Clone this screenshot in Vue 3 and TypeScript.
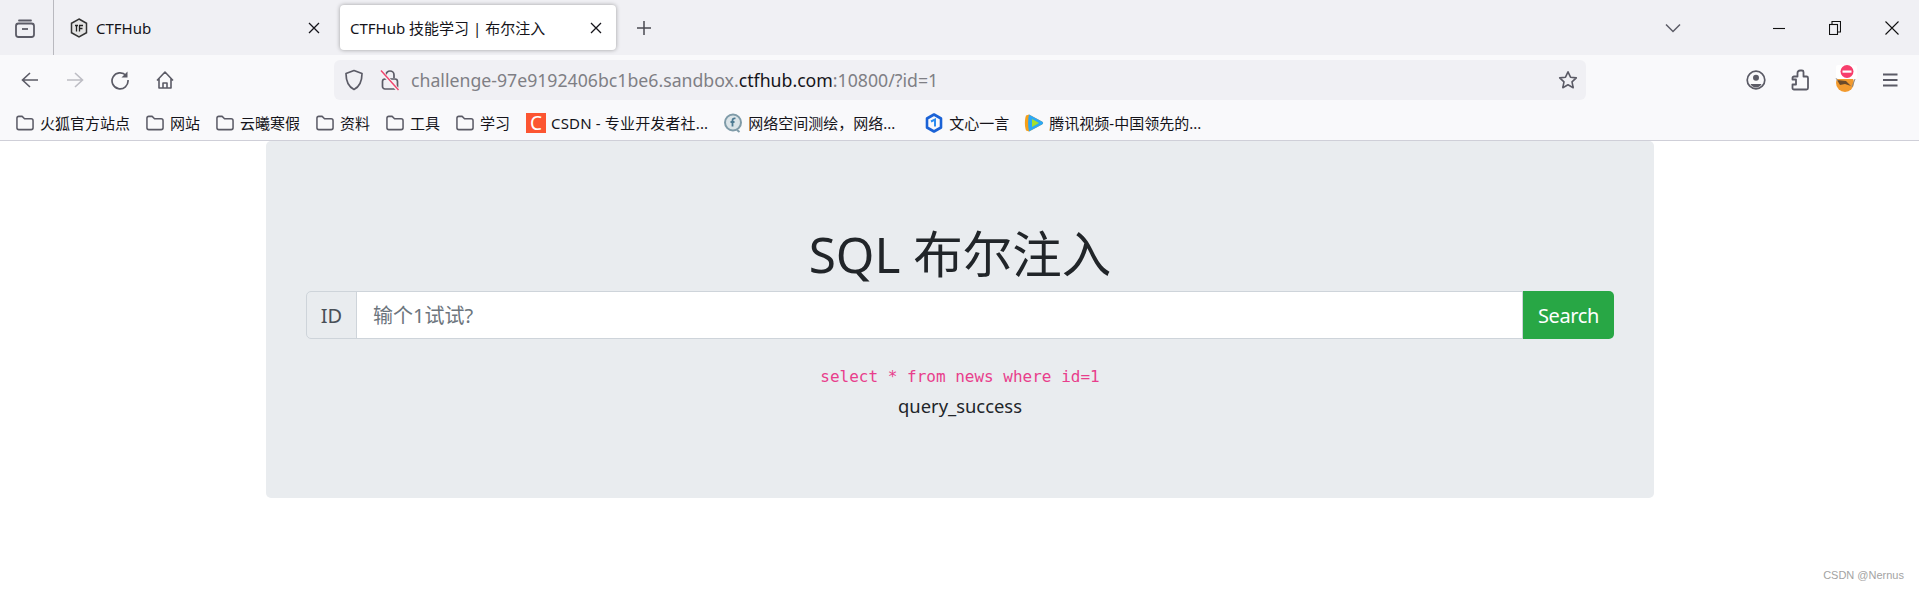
<script setup lang="ts">
interface Bookmark {
  label: string
  kind: 'folder' | 'csdn' | 'fofa' | 'wenxin' | 'tencent'
}
const bookmarks: Bookmark[] = [
  { label: '火狐官方站点', kind: 'folder' },
  { label: '网站', kind: 'folder' },
  { label: '云曦寒假', kind: 'folder' },
  { label: '资料', kind: 'folder' },
  { label: '工具', kind: 'folder' },
  { label: '学习', kind: 'folder' },
  { label: 'CSDN - 专业开发者社...', kind: 'csdn' },
  { label: '网络空间测绘，网络...', kind: 'fofa' },
  { label: '文心一言', kind: 'wenxin' },
  { label: '腾讯视频-中国领先的...', kind: 'tencent' }
]
</script>

<template>
  <div class="page">
    <header class="chrome">
      <div class="tabbar">
        <div class="tabs-btn">
          <svg width="22" height="22" viewBox="0 0 22 22" fill="none" stroke="#5b5b66" stroke-width="1.8">
            <path d="M5 3.5h12" stroke-linecap="round" />
            <rect x="2" y="6.5" width="18" height="13.5" rx="2.5" />
            <path d="M8 12h6" />
          </svg>
        </div>
        <div class="tab">
          <svg class="fav" width="18" height="20" viewBox="0 0 18 20">
            <path d="M9 1l7.5 4.3v9.4L9 19l-7.5-4.3V5.3z" fill="#e4e4e4" stroke="#333" stroke-width="1.5" />
            <path d="M5 7.5h3M6.500 7.500v6M9 7.500h4M9.500 7.500v6M9.500 10.500h3" fill="none" stroke="#222" stroke-width="1.300" />
          </svg>
          <span class="tab-title">CTFHub</span>
          <svg class="x" width="12" height="12" viewBox="0 0 12 12" stroke="#15141a" stroke-width="1.300">
            <path d="M1 1l10 10M11 1L1 11" />
          </svg>
        </div>
        <div class="tab active">
          <span class="tab-title">CTFHub 技能学习 | 布尔注入</span>
          <svg class="x" width="12" height="12" viewBox="0 0 12 12" stroke="#15141a" stroke-width="1.300">
            <path d="M1 1l10 10M11 1L1 11" />
          </svg>
        </div>
        <svg class="plus" width="16" height="16" viewBox="0 0 16 16" stroke="#4a4a52" stroke-width="1.500">
          <path d="M8 1v14M1 8h14" />
        </svg>
        <div class="spacer"></div>
        <svg class="chev" width="16" height="10" viewBox="0 0 16 10" fill="none" stroke="#5b5b66" stroke-width="1.500">
          <path d="M1 1.500l7 7 7-7" />
        </svg>
        <div class="winbtns">
          <svg width="12" height="12" viewBox="0 0 12 12" stroke="#111" stroke-width="1.100"><path d="M0 6.500h12" /></svg>
          <svg width="12" height="14" viewBox="0 0 12 14" fill="none" stroke="#111" stroke-width="1.100">
            <rect x="0.500" y="3.500" width="8" height="10" />
            <path d="M3 3V.5h8.500V11H9" />
          </svg>
          <svg width="14" height="14" viewBox="0 0 14 14" stroke="#111" stroke-width="1.100"><path d="M.5.5l13 13M13.500.5l-13 13" /></svg>
        </div>
      </div>

      <div class="toolbar">
        <div class="nav">
          <svg width="20" height="20" viewBox="0 0 20 20" fill="none" stroke="#5b5b66" stroke-width="1.600">
            <path d="M18 10H3M10 3l-7.500 7 7.500 7" />
          </svg>
          <svg width="20" height="20" viewBox="0 0 20 20" fill="none" stroke="#bdbdc4" stroke-width="1.600">
            <path d="M2 10h15M10 3l7.500 7-7.500 7" />
          </svg>
          <svg width="20" height="20" viewBox="0 0 20 20" fill="none" stroke="#5b5b66" stroke-width="1.700">
            <path d="M16 5.500A8 8 0 1 0 18 10" />
            <path d="M17.500 1.500v6h-6z" fill="#5b5b66" stroke="none" />
          </svg>
          <svg width="20" height="20" viewBox="0 0 20 20" fill="none" stroke="#5b5b66" stroke-width="1.600">
            <path d="M2 10.500L10 2l8 8.500M4 8.500V18h12V8.500M8 18v-5h4v5" stroke-linejoin="round" />
          </svg>
        </div>
        <div class="urlbar">
          <svg width="20" height="22" viewBox="0 0 20 22" fill="none" stroke="#5b5b66" stroke-width="1.700">
            <path d="M10 1.500l8 3c0 8-2 13-8 16-6-3-8-8-8-16z" stroke-linejoin="round" />
          </svg>
          <svg class="lock" width="20" height="22" viewBox="0 0 20 22" fill="none">
            <path d="M6 9V6a4 4 0 0 1 8 0v3" stroke="#5b5b66" stroke-width="1.700" />
            <rect x="2.500" y="10" width="15" height="10" rx="2.500" stroke="#5b5b66" stroke-width="1.700" />
            <path d="M1 2l17 19" stroke="#f5f5f7" stroke-width="3.500" />
            <path d="M1 1.500l17.500 19.500" stroke="#f0476f" stroke-width="1.500" />
          </svg>
          <span class="url"><span>challenge-97e9192406bc1be6.sandbox.</span><b>ctfhub.com</b><span>:10800/?id=1</span></span>
          <svg class="star" width="20" height="20" viewBox="0 0 20 20" fill="none" stroke="#5b5b66" stroke-width="1.600">
            <path d="M10 1.800l2.500 5.400 5.800.7-4.300 4 1.200 5.800L10 14.800l-5.200 2.900L6 11.900l-4.300-4 5.800-.7z" stroke-linejoin="round" />
          </svg>
        </div>
        <div class="actions">
          <svg width="20" height="20" viewBox="0 0 20 20" fill="none" stroke="#5b5b66" stroke-width="1.700">
            <circle cx="10" cy="10" r="8.800" />
            <circle cx="10" cy="7.800" r="3" fill="#5b5b66" stroke="none" />
            <path d="M4.500 14h11c-1 2-3 3.500-5.500 3.500S5.500 16 4.500 14z" fill="#5b5b66" stroke="none" />
          </svg>
          <svg width="20" height="22" viewBox="0 0 20 22" fill="none" stroke="#5b5b66" stroke-width="1.800">
            <path d="M11 1.500h1a1.500 1.500 0 0 1 1.500 1.500V7.500h3a1.500 1.500 0 0 1 1.500 1.500V19a1.500 1.500 0 0 1-1.500 1.500H4A1.500 1.500 0 0 1 2.500 19V15.500H6V10.500H2.500V9A1.500 1.500 0 0 1 4 7.500H7.500V4A2.500 2.500 0 0 1 10 1.500z" stroke-linejoin="round" />
          </svg>
          <svg class="fox" width="24" height="30" viewBox="0 0 24 30">
            <circle cx="11" cy="19" r="9" fill="#f29a2e" />
            <path d="M3 16l9 1 5 5-6-2-5 1z" fill="#6b4a2a" />
            <path d="M19 13l2 2-3 8" fill="none" stroke="#8a8a8a" stroke-width="1" />
            <path d="M2 14l2 3" stroke="#8a8a8a" stroke-width="1" />
            <rect x="2" y="1" width="21" height="14" rx="2" fill="#fff" />
            <circle cx="13" cy="7.500" r="6.500" fill="#f73e6c" />
            <rect x="8.500" y="6.500" width="9" height="2.200" fill="#fff" />
          </svg>
          <svg width="18" height="16" viewBox="0 0 18 16" stroke="#5b5b66" stroke-width="1.800">
            <path d="M2 2.500h14.500M2 8h14.500M2 13.500h14.500" />
          </svg>
        </div>
      </div>

      <nav class="bookmarks">
        <div v-for="b in bookmarks" :key="b.label" class="bm" :class="'bm-' + b.kind">
          <svg v-if="b.kind === 'folder'" width="18" height="18" viewBox="0 0 19 18" fill="none" stroke="#5b5b66" stroke-width="1.600">
            <path d="M1 4a2 2 0 0 1 2-2h3.500l2.500 2.500h7a2 2 0 0 1 2 2V14a2 2 0 0 1-2 2H3a2 2 0 0 1-2-2z" stroke-linejoin="round" />
          </svg>
          <span v-else-if="b.kind === 'csdn'" class="csdn-ico">C</span>
          <svg v-else-if="b.kind === 'fofa'" width="20" height="20" viewBox="0 0 20 20">
            <circle cx="10" cy="9.500" r="8" fill="#dbe4e8" stroke="#7f9ba8" stroke-width="2" />
            <path d="M12.500 5.500c-2-.5-3 .2-3 2v6M7.500 9h4" fill="none" stroke="#4d7a92" stroke-width="1.800" />
            <path d="M14 17l2.500 2" stroke="#7f9ba8" stroke-width="2" />
          </svg>
          <svg v-else-if="b.kind === 'wenxin'" width="20" height="20" viewBox="0 0 20 20" fill="none">
            <path d="M10 1.500L17 5.500v9L10 18.500 3 14.500v-9z" stroke="#1a62d6" stroke-width="2.600" stroke-linejoin="round" />
            <path d="M7 8.500L11 6.500v7" stroke="#2b8cf0" stroke-width="2" />
          </svg>
          <svg v-else width="20" height="20" viewBox="0 0 20 20">
            <path d="M2 2.500l3-1 13 7c1.500 1 1.500 2 0 3l-13 7-3-1c-1.500-4-1.500-11 0-15z" fill="#f7a11a" />
            <path d="M5 1.500l13 7c1.500 1 1.500 2 0 3l-13 7c-1.200-5-1.200-12 0-17z" fill="#2ca8f5" />
            <path d="M8 6l7 4-7 4z" fill="#a5e02a" />
          </svg>
          <span class="bm-label">{{ b.label }}</span>
        </div>
      </nav>
    </header>

    <main class="jumbo">
      <h1 class="title">SQL 布尔注入</h1>
      <form class="group" @submit.prevent>
        <span class="prefix">ID</span>
        <input class="field" type="text" placeholder="输个1试试?" />
        <button class="go" type="submit">Search</button>
      </form>
      <code class="sql">select * from news where id=1</code>
      <p class="result">query_success</p>
    </main>

    <span class="mark">CSDN @Nernus</span>
  </div>
</template>

<style>
html, body { margin: 0; background: #fff; }
</style>

<style scoped>
.page {
  position: relative;
  width: 1919px;
  height: 589px;
  overflow: hidden;
  background: #fff;
  font-family: "Noto Sans", "Noto Sans CJK SC", sans-serif;
  color: #212529;
}
.chrome { background: #f9f9fb; border-bottom: 1px solid #cfcfd8; height: 140px; }
.tabbar {
  display: flex;
  align-items: center;
  height: 55px;
  background: #f0f0f4;
}
.tabs-btn {
  display: flex;
  align-items: center;
  justify-content: center;
  box-sizing: border-box;
  width: 54px;
  height: 55px;
  padding-right: 4px;
  border-right: 1px solid #b9b9bf;
  flex: none;
}
.tab {
  display: flex;
  align-items: center;
  box-sizing: border-box;
  width: 276px;
  height: 45px;
  margin: 0 6px 0 4px;
  padding: 0 13px 0 12px;
  border-radius: 4px;
  font-size: 15px;
  color: #15141a;
  flex: none;
}
.tab.active {
  margin: 0;
  padding-left: 10px;
  background: #fff;
  box-shadow: 0 0 4px rgba(0, 0, 0, 0.35);
}
.fav { margin-right: 8px; flex: none; }
.tab-title { flex: 1; white-space: nowrap; overflow: hidden; }
.x { flex: none; margin-right: 1px; }
.plus { margin-left: 20px; flex: none; }
.spacer { flex: 1; }
.chev { margin-right: 92px; flex: none; }
.winbtns {
  display: flex;
  align-items: center;
  gap: 44px;
  padding-right: 20px;
}
.toolbar {
  display: flex;
  align-items: center;
  height: 45px;
  padding-top: 5px;
  box-sizing: border-box;
}
.nav {
  display: flex;
  align-items: center;
  gap: 25px;
  width: 334px;
  padding-left: 20px;
  box-sizing: border-box;
  flex: none;
}
.urlbar {
  display: flex;
  align-items: center;
  box-sizing: border-box;
  width: 1252px;
  height: 40px;
  padding: 0 8px 0 10px;
  background: #f0f0f4;
  border-radius: 6px;
  flex: none;
}
.lock { margin-left: 16px; flex: none; }
.url {
  margin-left: 11px;
  flex: 1;
  font-size: 17.7px;
  white-space: nowrap;
  color: #7f7f85;
}
.url b { font-weight: 400; color: #15141a; }
.actions {
  display: flex;
  align-items: center;
  gap: 24px;
  padding-left: 160px;
}
.fox { margin: -3px -1px 0 0; flex: none; }
.bookmarks {
  display: flex;
  align-items: center;
  height: 40px;
  padding: 5px 0 0 16px;
  box-sizing: border-box;
  font-size: 15px;
  color: #15141a;
}
.bm { display: flex; align-items: center; gap: 5px; margin-right: 17px; white-space: nowrap; }
.bm-folder { gap: 6px; margin-right: 16px; }
.bm-csdn { margin-right: 15px; }
.bm-csdn .bm-label { letter-spacing: 0.15px; }
.bm-fofa { margin-right: 29px; }
.bm-wenxin { margin-right: 15px; }
.csdn-ico {
  display: block;
  width: 20px;
  height: 20px;
  background: #fc5531;
  color: #fff;
  text-align: center;
  font: 400 19px/20px "Noto Sans", sans-serif;
}
.jumbo {
  display: flex;
  flex-direction: column;
  align-items: stretch;
  box-sizing: border-box;
  width: 1388px;
  height: 357px;
  margin: 0 0 0 266px;
  padding: 85px 40px 0;
  background: #e9ecef;
  border-radius: 5px;
  text-align: center;
}
.title {
  margin: 0 0 7px;
  font-size: 49.5px;
  font-weight: 400;
  line-height: 57.6px;
  color: #212529;
}
.group { display: flex; height: 48px; }
.prefix {
  display: flex;
  align-items: center;
  box-sizing: border-box;
  width: 51px;
  padding-top: 2px;
  justify-content: center;
  font-size: 20px;
  color: #495057;
  border: 1px solid #ced4da;
  border-radius: 5px 0 0 5px;
  background: #e9ecef;
}
.field {
  flex: 1;
  min-width: 0;
  box-sizing: border-box;
  height: 48px;
  padding: 2px 16px 0;
  margin-left: -1px;
  font: inherit;
  font-size: 20px;
  background: #fff;
  border: 1px solid #ced4da;
  outline: none;
}
.field::placeholder { color: #6c757d; opacity: 1; }
.go {
  width: 91px;
  padding: 2px 0 0;
  font: inherit;
  font-size: 20px;
  letter-spacing: -0.35px;
  color: #fff;
  background: #28a745;
  border: 0;
  border-radius: 0 5px 5px 0;
}
.sql {
  display: block;
  margin-top: 26px;
  font-family: "DejaVu Sans Mono", monospace;
  font-size: 16px;
  line-height: 24px;
  color: #e83e8c;
}
.result {
  margin: 5px 0 0;
  font-size: 18.4px;
  line-height: 24px;
  color: #212529;
}
.mark {
  position: absolute;
  right: 15px;
  bottom: 8px;
  font-family: "Liberation Sans", sans-serif;
  font-size: 11px;
  color: #a3a3a3;
}
</style>
